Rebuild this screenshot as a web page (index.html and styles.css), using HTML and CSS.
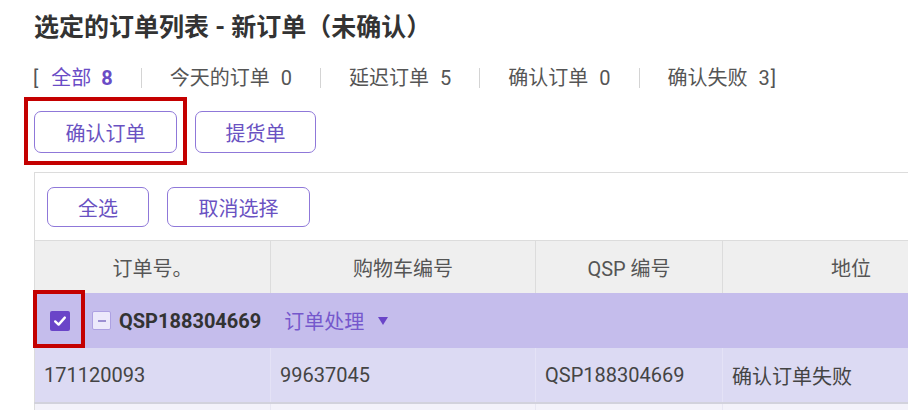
FILE: index.html
```
<!DOCTYPE html>
<html lang="zh-CN">
<head>
<meta charset="utf-8">
<title>选定的订单列表</title>
<link rel="stylesheet" href="styles.css">
</head>
<body>
<div class="page">
  <h1 class="title">选定的订单列表 - 新订单（未确认）</h1>
  <div class="tabs">
    <span class="bracket">[</span>
    <span class="tab tab-active">全部<span class="count">8</span></span>
    <span class="sep"></span>
    <span class="tab">今天的订单<span class="count">0</span></span>
    <span class="sep"></span>
    <span class="tab">延迟订单<span class="count">5</span></span>
    <span class="sep"></span>
    <span class="tab">确认订单<span class="count">0</span></span>
    <span class="sep"></span>
    <span class="tab">确认失败<span class="count">3</span></span>
    <span class="bracket bracket-end">]</span>
  </div>
  <div class="actions">
    <button class="btn btn-lg btn-marked">确认订单<span class="mark mark-btn"></span></button>
    <button class="btn btn-lg btn-pick">提货单</button>
  </div>
  <div class="panel">
    <div class="panel-bar">
      <button class="btn btn-sm btn-all">全选</button>
      <button class="btn btn-sm btn-clear">取消选择</button>
    </div>
    <div class="table">
      <div class="row head">
        <div class="cell">订单号。</div>
        <div class="cell">购物车编号</div>
        <div class="cell">QSP 编号</div>
        <div class="cell">地位</div>
      </div>
      <div class="group">
        <span class="mark mark-check"></span>
        <svg class="check" width="20" height="20" viewBox="0 0 20 20"><rect x="0" y="0" width="20" height="20" rx="2" fill="#6a45c8"/><path d="M5.2 10.4 L8.6 13.6 L14.8 6.6" fill="none" stroke="#fff" stroke-width="2.4" stroke-linecap="round" stroke-linejoin="round"/></svg>
        <span class="collapse"><span class="minus"></span></span>
        <span class="group-id">QSP188304669</span>
        <span class="group-action">订单处理<span class="caret"></span></span>
      </div>
      <div class="row data">
        <div class="cell">171120093</div>
        <div class="cell">99637045</div>
        <div class="cell">QSP188304669</div>
        <div class="cell">确认订单失败</div>
      </div>
      <div class="row next">
        <div class="cell"></div>
        <div class="cell"></div>
        <div class="cell"></div>
        <div class="cell"></div>
      </div>
    </div>
  </div>
</div>
</body>
</html>
```
FILE: styles.css
```
html, body {
  margin: 0;
  padding: 0;
  overflow: hidden;
  background: #ffffff;
}
body {
  font-family: Roboto, "Noto Sans CJK SC", sans-serif;
  color: #444;
}
.page {
  padding: 11px 0 0 34px;
}
.title {
  margin: 0;
  font-size: 25px;
  font-weight: 700;
  line-height: 34px;
  color: #333;
}
.tabs {
  margin-top: 19px;
  display: flex;
  align-items: center;
  height: 28px;
  font-size: 20px;
  line-height: 28px;
  color: #555;
}
.bracket {
  margin-left: -1px;
  margin-right: 13px;
  color: #555;
}
.bracket-end {
  margin-left: 1px;
  margin-right: 0;
}
.tab-active {
  color: #6a4cc6;
}
.count {
  margin-left: 11px;
}
.tab-active .count {
  font-weight: 700;
  margin-left: 10px;
}
.sep {
  width: 1px;
  height: 20px;
  background: #d4d4d4;
  margin: 0 28px;
}
.actions {
  margin-top: 19px;
  display: flex;
  gap: 18px;
}
.btn {
  position: relative;
  box-sizing: border-box;
  background: #fff;
  border: 1.5px solid #8f78d9;
  border-radius: 7px;
  color: #6a52c2;
  font-family: Roboto, "Noto Sans CJK SC", sans-serif;
  font-size: 20px;
  padding: 0;
  cursor: pointer;
}
.btn-lg {
  height: 42px;
}
.btn-marked {
  width: 143px;
}
.btn-pick {
  width: 121px;
}
.btn-sm {
  height: 40px;
}
.btn-all {
  width: 102px;
}
.btn-clear {
  width: 143px;
}
.mark {
  position: absolute;
  box-sizing: border-box;
  border: 4px solid #c40000;
  pointer-events: none;
}
.mark-btn {
  left: -11px;
  top: -15px;
  width: 163px;
  height: 68px;
}
.panel {
  margin-top: 19px;
  width: 945px;
  border-top: 1px solid #dcdcdc;
  border-left: 1px solid #dcdcdc;
  box-sizing: border-box;
}
.panel-bar {
  display: flex;
  gap: 18px;
  padding: 14px 12px 13px;
}
.table {
  margin-left: -1px;
  border-top: 1px solid #dcdcdc;
}
.row {
  display: grid;
  grid-template-columns: 236px 265px 187px 1fr;
}
.cell {
  box-sizing: border-box;
  border-left: 1px solid #dcdcdc;
  padding-left: 9px;
  display: flex;
  align-items: center;
  white-space: nowrap;
  font-size: 20px;
}
.head {
  height: 52px;
  background: #efefef;
}
.head .cell {
  justify-content: center;
  padding-left: 0;
  color: #555;
}
.group {
  position: relative;
  height: 55px;
  background: #c5bdec;
  display: flex;
  align-items: center;
  border-left: 1px solid #dcdcdc;
}
.mark-check {
  left: -2px;
  top: -3px;
  width: 52px;
  height: 58px;
}
.check {
  margin-left: 15px;
  flex: none;
}
.collapse {
  margin-left: 22px;
  box-sizing: border-box;
  width: 19px;
  height: 19px;
  border: 1px solid #ada1e2;
  border-radius: 2px;
  background: #ece9fb;
  display: flex;
  align-items: center;
  justify-content: center;
}
.minus {
  width: 8px;
  height: 2px;
  background: #9c90d2;
}
.group-id {
  margin-left: 8px;
  font-size: 20px;
  font-weight: 700;
  color: #333;
}
.group-action {
  margin-left: 23px;
  font-size: 20px;
  color: #7558cc;
  display: flex;
  align-items: center;
}
.caret {
  margin-left: 14px;
  width: 0;
  height: 0;
  border-left: 5px solid transparent;
  border-right: 5px solid transparent;
  border-top: 8px solid #6a45c8;
}
.data {
  height: 54px;
  background: #dcdaf3;
  border-bottom: 2px solid #d2d2dc;
}
.data .cell {
  border-left-color: #e4e2f6;
  color: #444;
}
.data .cell:first-child {
  border-left-color: #dcdcdc;
}
.next {
  height: 30px;
  background: #f3f2fa;
}
.next .cell {
  border-left-color: #e8e7f3;
}
.next .cell:first-child {
  border-left-color: #dcdcdc;
}
```
